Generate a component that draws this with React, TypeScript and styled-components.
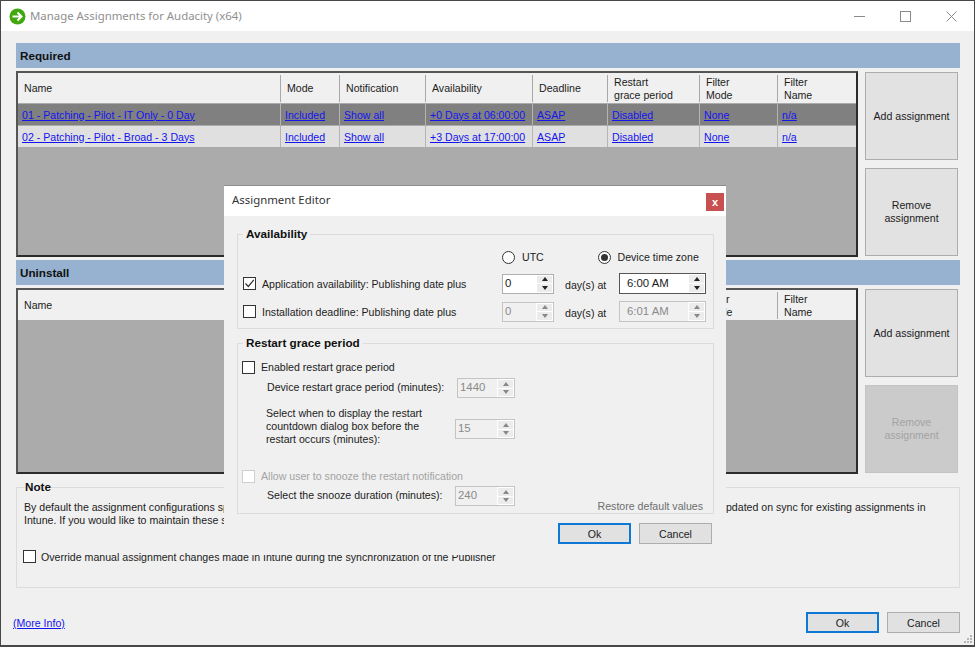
import * as React from 'react';
import styled, { createGlobalStyle } from 'styled-components';

const Global = createGlobalStyle`
  html, body {
    margin: 0;
    padding: 0;
    background: #f0f0f0;
  }
  body {
    font-family: "Liberation Sans", Arial, sans-serif;
    font-size: 10.6px;
    color: #1c1c1c;
  }
`;

const Window = styled.div`
  position: relative;
  box-sizing: border-box;
  width: 975px;
  height: 647px;
  display: flex;
  flex-direction: column;
  border: 1px solid #484848;
  border-bottom-width: 2px;
  background: #f0f0f0;
  overflow: hidden;
`;

const TitleBar = styled.div`
  height: 30px;
  flex: none;
  display: flex;
  align-items: center;
  padding-left: 8px;
  background: #fff;
`;

const TitleText = styled.div`
  margin: 0 0 1px 4px;
  font-family: "Noto Sans", sans-serif;
  font-size: 11.4px;
  color: #8f8f8f;
`;

const WinControls = styled.div`
  margin-left: auto;
  display: flex;
`;

const WinControl = styled.div`
  width: 46px;
  height: 30px;
  display: flex;
  align-items: center;
  justify-content: center;
`;

const Content = styled.div`
  flex: none;
  display: flex;
  flex-direction: column;
  padding: 12px 15px 0;
`;

const Section = styled.section`
  margin-bottom: 3px;
`;

const SectionHeader = styled.div`
  height: 25px;
  display: flex;
  align-items: center;
  padding-left: 4px;
  margin-right: -1px;
  margin-bottom: 3px;
  background: #97b2d0;
  font-size: 11.7px;
  font-weight: bold;
  color: #111;
`;

const SectionBody = styled.div`
  display: flex;
  gap: 7px;
`;

const Table = styled.div`
  box-sizing: border-box;
  width: 842px;
  height: 186px;
  background: #ababab;
  border: 2px solid #2b2b2b;
  border-top-color: #555;
  border-left-color: #555;
`;

const COLUMNS = '263px 59px 86px 107px 75px 92px 78px 78px';

const HeaderRow = styled.div`
  display: grid;
  grid-template-columns: ${COLUMNS};
  height: 30px;
  background: #f0f0f0;
`;

const HeaderCell = styled.div`
  box-sizing: border-box;
  display: flex;
  align-items: center;
  padding-left: 6px;
  line-height: 13px;
  border-right: 1px solid #a8a8a8;
  margin: 2px 0 1px;

  &:last-child {
    border-right: none;
  }
`;

const DataRow = styled.div<{ $selected?: boolean }>`
  display: grid;
  grid-template-columns: ${COLUMNS};
  height: 21px;
  margin-top: 1px;
  background: ${(p) => (p.$selected ? '#808080' : '#e0e0e0')};
`;

const DataCell = styled.div`
  box-sizing: border-box;
  display: flex;
  align-items: center;
  padding-left: 4px;
  border-right: 1px solid #b4b4b4;

  &:last-child {
    border-right: none;
  }
`;

const Link = styled.a`
  color: #1414ee;
  text-decoration: underline;
  white-space: nowrap;
`;

const SideButtons = styled.div`
  display: flex;
  flex-direction: column;
  gap: 8px;
  margin-top: 1px;
`;

const SideButton = styled.div<{ $disabled?: boolean }>`
  box-sizing: border-box;
  width: 93px;
  height: 88px;
  display: flex;
  align-items: center;
  justify-content: center;
  text-align: center;
  line-height: 13px;
  background: ${(p) => (p.$disabled ? '#cbcbcb' : '#e2e2e2')};
  border: 1px solid ${(p) => (p.$disabled ? '#c4c4c4' : '#adadad')};
  color: ${(p) => (p.$disabled ? '#a3a3a3' : '#1c1c1c')};
`;

const Group = styled.fieldset`
  box-sizing: border-box;
  min-width: 0;
  margin: 0;
  border: 1px solid #dcdcdc;
`;

const GroupTitle = styled.legend`
  padding: 0;
  font-size: 11.7px;
  font-weight: bold;
  line-height: 14px;
  color: #111;
`;

const NoteGroup = styled(Group)`
  height: 108px;
  margin: 3px -1px 0 0;
  padding: 7px 7px 0;
  white-space: nowrap;

  ${GroupTitle} {
    margin-left: 1px;
  }
`;

const NoteText = styled.div`
  line-height: 13px;
`;

const OverrideRow = styled.div`
  display: flex;
  align-items: center;
  gap: 5px;
  margin-top: 23px;
  margin-left: -1px;
`;

const CheckBox = styled.span<{ $disabled?: boolean }>`
  box-sizing: border-box;
  flex: none;
  width: 13px;
  height: 13px;
  display: inline-flex;
  align-items: center;
  justify-content: center;
  background: #fff;
  border: 1px solid ${(p) => (p.$disabled ? '#cfcfcf' : '#333')};
`;

const Footer = styled.div`
  display: flex;
  align-items: center;
  justify-content: space-between;
  padding: 24px 14px 0 12px;
`;

const FooterButtons = styled.div`
  display: flex;
  gap: 8px;
`;

const PushButton = styled.div<{ $primary?: boolean }>`
  box-sizing: border-box;
  width: 73px;
  height: 21px;
  display: flex;
  align-items: center;
  justify-content: center;
  background: #e1e1e1;
  border: ${(p) => (p.$primary ? '2px solid #0f78d4' : '1px solid #adadad')};
`;

const Grip = styled.svg`
  position: absolute;
  right: 1px;
  bottom: 1px;
`;

const Dialog = styled.div`
  position: absolute;
  left: 223px;
  top: 184px;
  box-sizing: border-box;
  width: 502px;
  height: 370px;
  display: flex;
  flex-direction: column;
  background: #f0f0f0;
  border-top: 1px solid #8c8c8c;
`;

const DialogTitle = styled.div`
  height: 30px;
  flex: none;
  display: flex;
  align-items: center;
  justify-content: space-between;
  padding: 0 2px 0 8px;
  background: #fff;
`;

const DialogTitleText = styled.div`
  margin-bottom: 3px;
  font-family: "Noto Sans", sans-serif;
  font-size: 11.4px;
  color: #333;
`;

const DialogClose = styled.div`
  width: 18px;
  height: 18px;
  margin-top: 1px;
  display: flex;
  align-items: center;
  justify-content: center;
  background: #c75050;
  color: #fff;
  font-weight: bold;
  font-size: 11px;
`;

const DialogBody = styled.div`
  display: flex;
  flex-direction: column;
  gap: 7px;
  padding: 11px 12px 0 13px;
`;

const DialogGroup = styled(Group)`
  padding: 0 6px 0 5px;

  ${GroupTitle} {
    margin-left: 0;
    padding: 0 3px;
  }
`;

const RadioRow = styled.div`
  display: flex;
  height: 14px;
  margin: 9px 0 9px 259px;
`;

const RadioOption = styled.div<{ $width: number }>`
  width: ${(p) => p.$width}px;
  display: flex;
  align-items: center;
  gap: 7px;
  white-space: nowrap;
`;

const RadioDot = styled.span<{ $on?: boolean }>`
  box-sizing: border-box;
  flex: none;
  width: 13px;
  height: 13px;
  display: inline-flex;
  align-items: center;
  justify-content: center;
  background: #fff;
  border: 1px solid #333;
  border-radius: 50%;

  &::after {
    content: '';
    display: ${(p) => (p.$on ? 'block' : 'none')};
    width: 7px;
    height: 7px;
    border-radius: 50%;
    background: #333;
  }
`;

const DateRow = styled.div`
  display: flex;
  align-items: center;
  height: 21px;
  margin-bottom: 7px;

  &:last-child {
    margin-bottom: 6px;
  }
`;

const DateLabel = styled.div`
  width: 259px;
  display: flex;
  align-items: center;
  gap: 6px;
`;

const DaysAt = styled.div`
  width: 54px;
  margin-left: 11px;
  padding-top: 2px;
`;

const Spin = styled.div<{ $width: number; $disabled?: boolean; $focus?: boolean; $center?: boolean }>`
  box-sizing: border-box;
  flex: none;
  width: ${(p) => p.$width}px;
  height: ${(p) => (p.$center ? 21 : 20)}px;
  display: flex;
  align-items: center;
  justify-content: space-between;
  padding-left: ${(p) => (p.$center ? 7 : 2)}px;
  font-size: 11.4px;
  background: ${(p) => (p.$disabled ? '#f0f0f0' : '#fff')};
  border: 1px solid ${(p) => (p.$focus ? '#555' : p.$disabled ? '#c4c4c4' : '#b0b0b0')};
  color: ${(p) => (p.$disabled ? '#8a8a8a' : '#1c1c1c')};
`;

const SpinValue = styled.span`
  margin-bottom: 2px;
`;

const SpinArrows = styled.div`
  width: 15px;
  align-self: stretch;
  display: flex;
  flex-direction: column;
  gap: 1px;
  padding: 1px;
  background: #fff;
`;

const SpinArrow = styled.div<{ $down?: boolean; $disabled?: boolean }>`
  flex: 1;
  display: flex;
  align-items: center;
  justify-content: center;
  background: #ececec;

  &::after {
    content: '';
    border-left: 3px solid transparent;
    border-right: 3px solid transparent;
    ${(p) => (p.$down ? 'border-top' : 'border-bottom')}: 4px solid ${(p) => (p.$disabled ? '#888' : '#222')};
  }
`;

const CheckRow = styled.div<{ $top: number; $disabled?: boolean }>`
  display: flex;
  align-items: center;
  gap: 6px;
  height: 14px;
  margin-top: ${(p) => p.$top}px;
  margin-left: -1px;
  color: ${(p) => (p.$disabled ? '#a3a3a3' : 'inherit')};
`;

const SettingRow = styled.div<{ $top: number }>`
  width: 248px;
  display: flex;
  align-items: flex-start;
  justify-content: space-between;
  margin-top: ${(p) => p.$top}px;
  padding-left: 24px;
`;

const SettingLabel = styled.div`
  line-height: 13px;
  padding-top: 3px;
  white-space: nowrap;
`;

const MultiLabel = styled(SettingLabel)`
  padding-top: 0;
  margin-left: -1px;
`;

const MultiSpin = styled(Spin)`
  margin-top: 12px;
`;

const SnoozeRow = styled.div`
  display: flex;
  justify-content: space-between;
  height: 30px;
`;

const RestoreLink = styled.div`
  align-self: flex-end;
  line-height: 14px;
  margin-right: 4px;
  color: #6e6e6e;
`;

const DialogButtons = styled.div`
  display: flex;
  justify-content: flex-end;
  gap: 8px;
  margin-top: 2px;
  padding-right: 2px;
`;

const columns: React.ReactNode[] = [
  'Name',
  'Mode',
  'Notification',
  'Availability',
  'Deadline',
  <>Restart<br />grace period</>,
  <>Filter<br />Mode</>,
  <>Filter<br />Name</>,
];

const rows = [
  ['01 - Patching - Pilot - IT Only - 0 Day', 'Included', 'Show all', '+0 Days at 06:00:00', 'ASAP', 'Disabled', 'None', 'n/a'],
  ['02 - Patching - Pilot - Broad - 3 Days', 'Included', 'Show all', '+3 Days at 17:00:00', 'ASAP', 'Disabled', 'None', 'n/a'],
];

const Tick = () => (
  <svg width="11" height="11" viewBox="0 0 11 11" fill="none">
    <path d="M1.5 5.5 L4.3 8.5 L9.8 1.8" stroke="#333" strokeWidth="1.2" />
  </svg>
);

const AppIcon = () => (
  <svg width="17" height="17" viewBox="0 0 17 17">
    <circle cx="8.5" cy="8.5" r="8" fill="#43a80f" />
    <path d="M3.5 8.5 H12 M8.5 4.5 L12.5 8.5 L8.5 12.5" fill="none" stroke="#fff" strokeWidth="2" />
  </svg>
);

const Arrows = ({ disabled }: { disabled?: boolean }) => (
  <SpinArrows>
    <SpinArrow $disabled={disabled} />
    <SpinArrow $down $disabled={disabled} />
  </SpinArrows>
);

type SpinnerProps = { value: string; width: number; disabled?: boolean; focus?: boolean; center?: boolean };

const Spinner = ({ value, width, disabled, focus, center }: SpinnerProps) => (
  <Spin $width={width} $disabled={disabled} $focus={focus} $center={center}>
    <SpinValue>{value}</SpinValue>
    <Arrows disabled={disabled} />
  </Spin>
);

const AssignmentSection = ({ title, data, canRemove }: { title: string; data: string[][]; canRemove: boolean }) => (
  <Section>
    <SectionHeader>{title}</SectionHeader>
    <SectionBody>
      <Table>
        <HeaderRow>
          {columns.map((c, i) => (
            <HeaderCell key={i}>{c}</HeaderCell>
          ))}
        </HeaderRow>
        {data.map((r, i) => (
          <DataRow key={i} $selected={i === 0}>
            {r.map((c, j) => (
              <DataCell key={j}>
                <Link>{c}</Link>
              </DataCell>
            ))}
          </DataRow>
        ))}
      </Table>
      <SideButtons>
        <SideButton>Add assignment</SideButton>
        <SideButton $disabled={!canRemove}>Remove<br />assignment</SideButton>
      </SideButtons>
    </SectionBody>
  </Section>
);

export default function App() {
  return (
    <Window>
      <Global />
      <TitleBar>
        <AppIcon />
        <TitleText>Manage Assignments for Audacity (x64)</TitleText>
        <WinControls>
          <WinControl>
            <svg width="11" height="11" viewBox="0 0 11 11"><path d="M0 5.5 H11" stroke="#8a8a8a" /></svg>
          </WinControl>
          <WinControl>
            <svg width="11" height="11" viewBox="0 0 11 11"><rect x="0.5" y="0.5" width="10" height="10" fill="none" stroke="#8a8a8a" /></svg>
          </WinControl>
          <WinControl>
            <svg width="11" height="11" viewBox="0 0 11 11"><path d="M0.5 0.5 L10.5 10.5 M10.5 0.5 L0.5 10.5" stroke="#8a8a8a" /></svg>
          </WinControl>
        </WinControls>
      </TitleBar>

      <Content>
        <AssignmentSection title="Required" data={rows} canRemove />
        <AssignmentSection title="Uninstall" data={[]} canRemove={false} />
        <NoteGroup>
          <GroupTitle>Note</GroupTitle>
          <NoteText>
            By default the assignment configurations specified in this window are applied when this application is published to Intune, and it will automatically be updated on sync for existing assignments in
            <br />
            Intune. If you would like to maintain these settings, select the option below.
          </NoteText>
          <OverrideRow>
            <CheckBox />
            Override manual assignment changes made in Intune during the synchronization of the Publisher
          </OverrideRow>
        </NoteGroup>
      </Content>

      <Footer>
        <Link>(More Info)</Link>
        <FooterButtons>
          <PushButton $primary>Ok</PushButton>
          <PushButton>Cancel</PushButton>
        </FooterButtons>
      </Footer>
      <Grip width="10" height="10" viewBox="0 0 10 10" fill="#b5b5b5">
        <rect x="7" y="1" width="2" height="2" />
        <rect x="4" y="4" width="2" height="2" />
        <rect x="7" y="4" width="2" height="2" />
        <rect x="1" y="7" width="2" height="2" />
        <rect x="4" y="7" width="2" height="2" />
        <rect x="7" y="7" width="2" height="2" />
      </Grip>

      <Dialog>
        <DialogTitle>
          <DialogTitleText>Assignment Editor</DialogTitleText>
          <DialogClose>x</DialogClose>
        </DialogTitle>
        <DialogBody>
          <DialogGroup>
            <GroupTitle>Availability</GroupTitle>
            <RadioRow>
              <RadioOption $width={96}>
                <RadioDot />
                UTC
              </RadioOption>
              <RadioOption $width={110}>
                <RadioDot $on />
                Device time zone
              </RadioOption>
            </RadioRow>
            <DateRow>
              <DateLabel>
                <CheckBox><Tick /></CheckBox>
                Application availability: Publishing date plus
              </DateLabel>
              <Spinner value="0" width={52} />
              <DaysAt>day(s) at</DaysAt>
              <Spinner value="6:00 AM" width={87} focus center />
            </DateRow>
            <DateRow>
              <DateLabel>
                <CheckBox />
                Installation deadline: Publishing date plus
              </DateLabel>
              <Spinner value="0" width={52} disabled />
              <DaysAt>day(s) at</DaysAt>
              <Spinner value="6:01 AM" width={87} disabled center />
            </DateRow>
          </DialogGroup>

          <DialogGroup>
            <GroupTitle>Restart grace period</GroupTitle>
            <CheckRow $top={10}>
              <CheckBox />
              Enabled restart grace period
            </CheckRow>
            <SettingRow $top={4}>
              <SettingLabel>Device restart grace period (minutes):</SettingLabel>
              <Spinner value="1440" width={58} disabled />
            </SettingRow>
            <SettingRow $top={9}>
              <MultiLabel>
                Select when to display the restart
                <br />
                countdown dialog box before the
                <br />
                restart occurs (minutes):
              </MultiLabel>
              <MultiSpin $width={60} $disabled>
                <SpinValue>15</SpinValue>
                <Arrows disabled />
              </MultiSpin>
            </SettingRow>
            <CheckRow $top={23} $disabled>
              <CheckBox $disabled />
              Allow user to snooze the restart notification
            </CheckRow>
            <SnoozeRow>
              <SettingRow $top={3}>
                <SettingLabel>Select the snooze duration (minutes):</SettingLabel>
                <Spinner value="240" width={60} disabled />
              </SettingRow>
              <RestoreLink>Restore default values</RestoreLink>
            </SnoozeRow>
          </DialogGroup>

          <DialogButtons>
            <PushButton $primary>Ok</PushButton>
            <PushButton>Cancel</PushButton>
          </DialogButtons>
        </DialogBody>
      </Dialog>
    </Window>
  );
}
